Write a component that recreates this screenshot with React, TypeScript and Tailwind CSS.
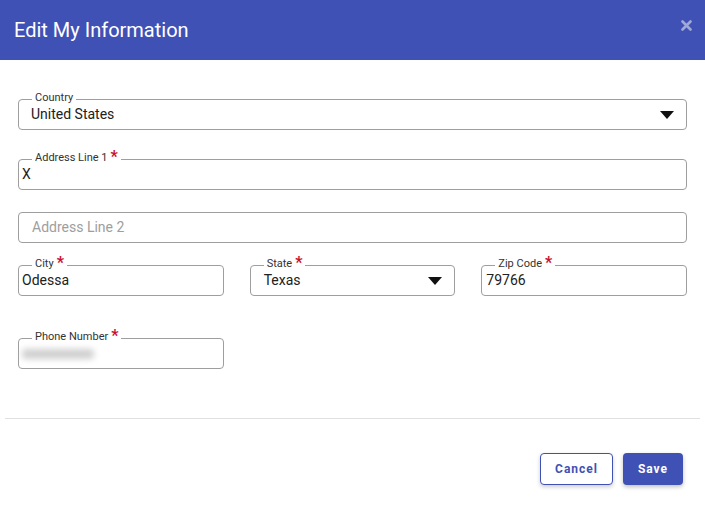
import type { FC, ReactNode } from 'react';

const Caret = () => (
  <svg width="14" height="8" viewBox="0 0 14 8" className="shrink-0">
    <path d="M0 0h14L7 8z" fill="#111" />
  </svg>
);

type FieldProps = {
  label?: string;
  required?: boolean;
  className?: string;
  pad?: string;
  select?: boolean;
  children: ReactNode;
};

const Field: FC<FieldProps> = ({ label, required, className = '', pad = 'pl-[3px]', select, children }) => (
  <div className={`relative h-[31px] rounded-[4px] border border-[#9e9e9e] flex items-center ${pad} pr-[12px] ${className}`}>
    {label && (
      <span className="absolute -top-[9px] left-[13px] bg-white px-[3px] text-[11px] leading-[14px] text-[#333] flex items-start">
        {label}
        {required && <span className="ml-[3px] text-[16px] leading-[12px] font-bold text-[#c8102e]">*</span>}
      </span>
    )}
    <div className="flex-1 text-[14px] text-[#212121]">{children}</div>
    {select && <Caret />}
  </div>
);

export default function App() {
  return (
    <div className="w-[705px] h-[508px] bg-white font-[Roboto,sans-serif] flex flex-col">
      <header className="h-[60px] bg-[#3f51b5] flex items-center justify-between pl-[14px] pr-[13px] shrink-0">
        <h2 className="text-white text-[20px]">Edit My Information</h2>
        <svg width="11" height="11" viewBox="0 0 11 11" className="mb-[10px]">
          <path d="M1.5 1.5l8 8M9.5 1.5l-8 8" stroke="#9fa8da" strokeWidth="2.6" strokeLinecap="round" />
        </svg>
      </header>
      <div className="px-[18px] pt-[39px] flex flex-col">
        <Field label="Country" pad="pl-[12px]" select>United States</Field>
        <Field label="Address Line 1" required className="mt-[29px]">X</Field>
        <Field pad="pl-[13px]" className="mt-[22px]">
          <span className="text-[#9e9e9e]">Address Line 2</span>
        </Field>
        <div className="grid grid-cols-3 gap-[26px] mt-[22px]">
          <Field label="City" required>Odessa</Field>
          <Field label="State" required pad="pl-[13px]" select>Texas</Field>
          <Field label="Zip Code" required pad="pl-[4px]">79766</Field>
        </div>
        <div className="grid grid-cols-3 gap-[26px] mt-[42px]">
          <Field label="Phone Number" required>
            <div className="h-[10px] w-[72px] bg-[#cfcfcf] rounded blur-[3px]" />
          </Field>
        </div>
      </div>
      <div className="mt-[49px] mx-[5px] border-t border-[#e0e0e0]" />
      <div className="flex justify-end gap-[10px] pr-[22px] pt-[34px]">
        <button type="button" className="w-[73px] h-[32px] rounded-[4px] border border-[#3f51b5] text-[#3f51b5] text-[12px] font-bold tracking-[1px] shadow-[0_2px_4px_rgba(0,0,0,0.2)] bg-white">
          Cancel
        </button>
        <button type="button" className="w-[60px] h-[32px] rounded-[4px] bg-[#3f51b5] text-white text-[12px] font-bold tracking-[1px] shadow-[0_2px_4px_rgba(0,0,0,0.25)]">
          Save
        </button>
      </div>
    </div>
  );
}
